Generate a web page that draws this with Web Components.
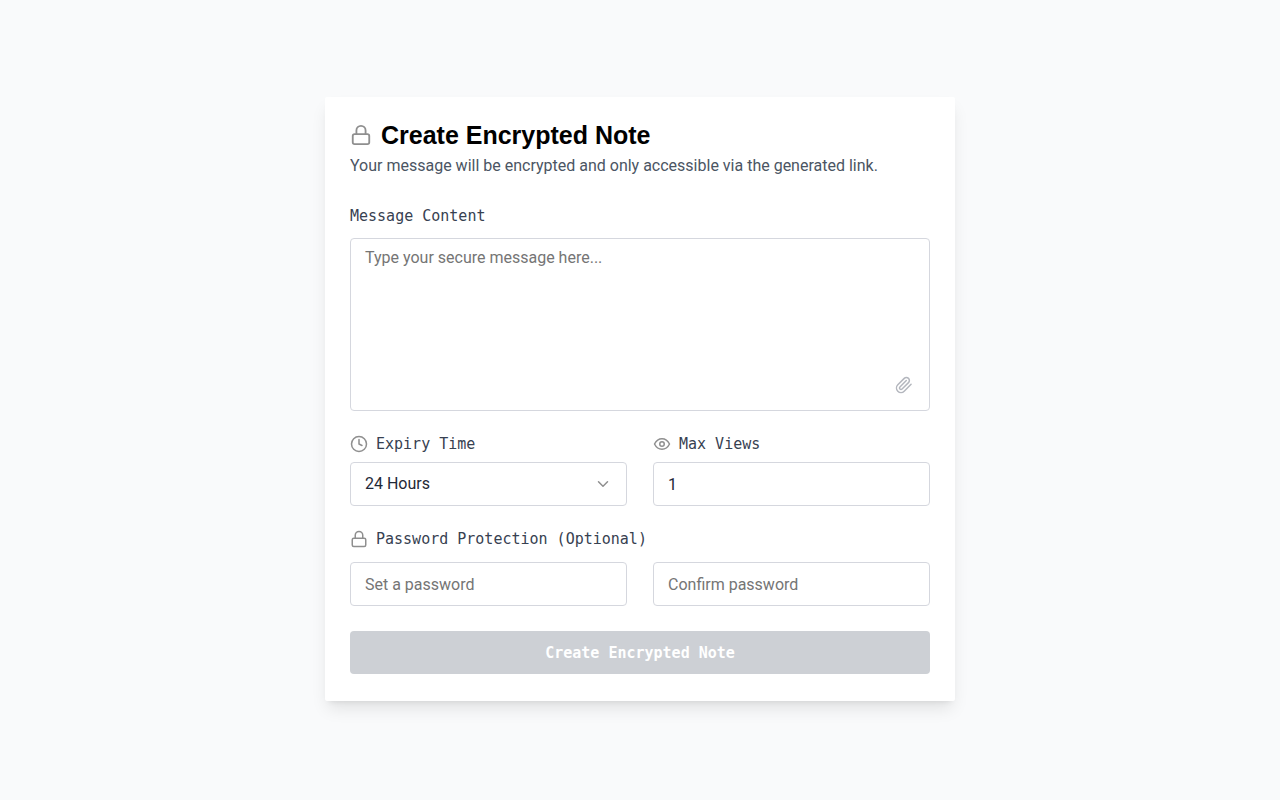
<!DOCTYPE html>
<html lang="en">
<head>
<meta charset="utf-8">
<meta name="viewport" content="width=device-width, initial-scale=1">
<title>Create Encrypted Note</title>
<style>
  body {
    margin: 0;
    background: #f9fafb;
    --sans: Roboto, 'Liberation Sans', sans-serif;
    --heading: 'Liberation Sans', Arial, sans-serif;
    --mono: 'DejaVu Sans Mono', 'Liberation Mono', monospace;
    font-family: var(--sans);
    font-size: 16px;
    line-height: 22px;
    color: #1f2937;
  }
</style>
</head>
<body>
<note-page>
  <note-card heading="Create Encrypted Note">
    <span slot="description">Your message will be encrypted and only accessible via the generated link.</span>
    <note-form></note-form>
  </note-card>
</note-page>

<script>
const ICONS = {
  lock: '<rect x="3" y="11" width="18" height="11" rx="2"/><path d="M7 11V7a5 5 0 0 1 10 0v4"/>',
  clock: '<circle cx="12" cy="12" r="10"/><path d="M12 6v6l4 2"/>',
  eye: '<path d="M2 12s3.5-7 10-7 10 7 10 7-3.5 7-10 7S2 12 2 12z"/><circle cx="12" cy="12" r="3"/>',
  chevron: '<path d="m6 9 6 6 6-6"/>',
  clip: '<path d="m21.44 11.05-9.19 9.19a6 6 0 0 1-8.49-8.49l8.57-8.57A4 4 0 1 1 18 8.84l-8.59 8.57a2 2 0 0 1-2.83-2.83l8.49-8.48"/>',
};

// shared by every element that renders a control
const CONTROL_CSS = `
  *, *::before, *::after { box-sizing: border-box; }
  label, legend {
    display: flex;
    align-items: center;
    gap: 8px;
    padding: 0;
    font-family: var(--mono);
    font-size: 15px;
    color: #374151;
  }
  note-icon { color: #8f8f8f; }
  input, select, textarea {
    display: block;
    width: 100%;
    margin: 0;
    padding: 8px 14px;
    border: 1px solid #d5d7de;
    border-radius: 4px;
    background: #fff;
    color: #1f2937;
    font-family: var(--sans);
    font-size: 16px;
    line-height: 22px;
    outline: none;
  }
  input, select { height: 44px; }
  input::placeholder, textarea::placeholder { color: #757575; opacity: 1; }
  input:focus, select:focus, textarea:focus { border-color: #6b7280; }
`;

class NoteIcon extends HTMLElement {
  constructor() {
    super();
    this.attachShadow({ mode: 'open' });
  }
  connectedCallback() {
    this.shadowRoot.innerHTML = `
      <style>
        :host { display: block; flex: none; width: 18px; height: 18px; }
        svg { display: block; width: 100%; height: 100%; }
      </style>
      <svg viewBox="0 0 24 24" fill="none" stroke="currentColor" stroke-width="2"
        stroke-linecap="round" stroke-linejoin="round" aria-hidden="true">${ICONS[this.getAttribute('name')]}</svg>
    `;
  }
}
customElements.define('note-icon', NoteIcon);

class NotePage extends HTMLElement {
  constructor() {
    super();
    this.attachShadow({ mode: 'open' }).innerHTML = `
      <style>
        :host {
          display: flex;
          align-items: center;
          justify-content: center;
          box-sizing: border-box;
          min-height: 100vh;
          padding: 24px 24px 26px;
        }
      </style>
      <slot></slot>
    `;
  }
}
customElements.define('note-page', NotePage);

class NoteCard extends HTMLElement {
  constructor() {
    super();
    this.attachShadow({ mode: 'open' });
  }
  connectedCallback() {
    this.shadowRoot.innerHTML = `
      <style>
        :host {
          display: block;
          box-sizing: border-box;
          width: 100%;
          max-width: 630px;
          padding: 22px 25px 27px;
          background: #fff;
          border-radius: 2px;
          box-shadow: 0 10px 16px -3px rgba(0,0,0,0.1), 0 4px 6px -4px rgba(0,0,0,0.1);
        }
        .title {
          display: flex;
          align-items: center;
          gap: 9px;
          margin-bottom: 4px;
        }
        .title note-icon { width: 22px; height: 22px; color: #8f8f8f; }
        h1 {
          margin: 0;
          font-family: var(--heading);
          font-size: 25px;
          line-height: 32px;
          font-weight: 700;
          color: #000;
        }
        p { margin: 0 0 28px; color: #4b5563; }
      </style>
      <header>
        <div class="title"><note-icon name="lock"></note-icon><h1>${this.getAttribute('heading')}</h1></div>
        <p><slot name="description"></slot></p>
      </header>
      <slot></slot>
    `;
  }
}
customElements.define('note-card', NoteCard);

class MessageField extends HTMLElement {
  constructor() {
    super();
    this.attachShadow({ mode: 'open' }).innerHTML = `
      <style>
        ${CONTROL_CSS}
        :host { display: block; }
        label { margin-bottom: 11px; }
        .box { position: relative; }
        textarea { height: 173px; resize: none; }
        button {
          position: absolute;
          right: 17px;
          bottom: 17px;
          padding: 0;
          border: 0;
          background: none;
          cursor: pointer;
        }
        button note-icon { color: #b4b7be; }
      </style>
      <label for="message">Message Content</label>
      <div class="box">
        <textarea id="message" placeholder="Type your secure message here..."></textarea>
        <button type="button" aria-label="Attach file"><note-icon name="clip"></note-icon></button>
      </div>
    `;
  }
}
customElements.define('message-field', MessageField);

class ExpiryField extends HTMLElement {
  constructor() {
    super();
    this.attachShadow({ mode: 'open' }).innerHTML = `
      <style>
        ${CONTROL_CSS}
        :host { display: block; }
        label { margin-bottom: 7px; }
        .box { position: relative; }
        select { appearance: none; padding-right: 40px; }
        .box note-icon {
          position: absolute;
          right: 15px;
          top: 13px;
          pointer-events: none;
        }
      </style>
      <label for="expiry"><note-icon name="clock"></note-icon>Expiry Time</label>
      <div class="box">
        <select id="expiry">
          <option>1 Hour</option>
          <option selected>24 Hours</option>
          <option>7 Days</option>
          <option>30 Days</option>
        </select>
        <note-icon name="chevron"></note-icon>
      </div>
    `;
  }
}
customElements.define('expiry-field', ExpiryField);

class ViewsField extends HTMLElement {
  constructor() {
    super();
    this.attachShadow({ mode: 'open' }).innerHTML = `
      <style>
        ${CONTROL_CSS}
        :host { display: block; }
        label { margin-bottom: 7px; }
        input { appearance: textfield; }
      </style>
      <label for="views"><note-icon name="eye"></note-icon>Max Views</label>
      <input id="views" type="number" min="1" value="1">
    `;
  }
}
customElements.define('views-field', ViewsField);

class PasswordFields extends HTMLElement {
  constructor() {
    super();
    this.attachShadow({ mode: 'open' }).innerHTML = `
      <style>
        ${CONTROL_CSS}
        :host { display: block; }
        fieldset { min-width: 0; margin: 0; padding: 0; border: 0; }
        legend { margin-bottom: 12px; }
        .row { display: grid; grid-template-columns: 1fr 1fr; gap: 26px; }
      </style>
      <fieldset>
        <legend><note-icon name="lock"></note-icon>Password Protection (Optional)</legend>
        <div class="row">
          <input type="password" placeholder="Set a password" aria-label="Set a password">
          <input type="password" placeholder="Confirm password" aria-label="Confirm password">
        </div>
      </fieldset>
    `;
  }
}
customElements.define('password-fields', PasswordFields);

class NoteForm extends HTMLElement {
  constructor() {
    super();
    this.attachShadow({ mode: 'open' }).innerHTML = `
      <style>
        :host { display: block; }
        form { display: flex; flex-direction: column; gap: 22px; }
        .row { display: grid; grid-template-columns: 1fr 1fr; gap: 26px; }
        button {
          height: 43px;
          margin-top: 3px;
          border: 0;
          border-radius: 4px;
          background: #cdd0d5;
          color: #fff;
          font-family: var(--mono);
          font-size: 15px;
          font-weight: 700;
        }
      </style>
      <form>
        <message-field></message-field>
        <div class="row">
          <expiry-field></expiry-field>
          <views-field></views-field>
        </div>
        <password-fields></password-fields>
        <button type="submit" disabled>Create Encrypted Note</button>
      </form>
    `;
  }
}
customElements.define('note-form', NoteForm);
</script>
</body>
</html>
